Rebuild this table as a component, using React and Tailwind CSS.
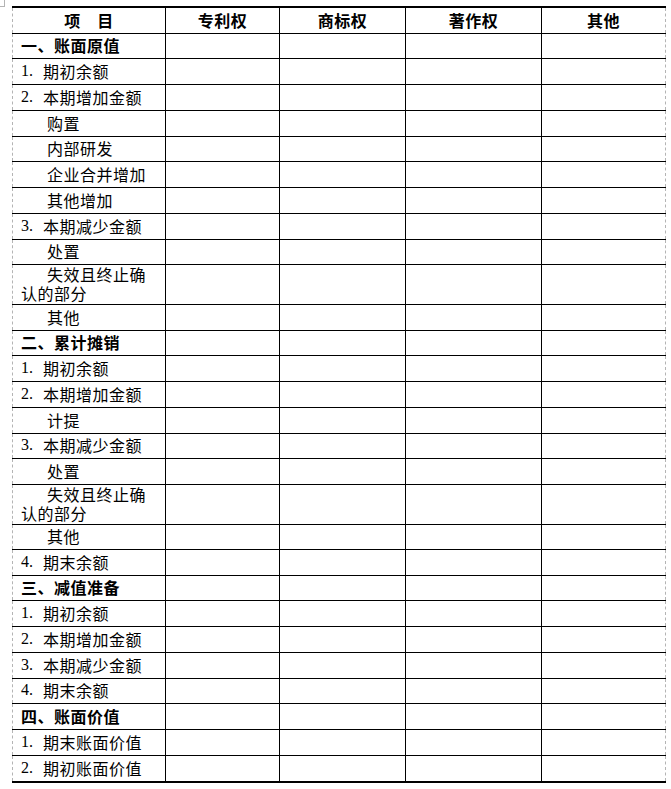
import React from "react";

const cols = ["w-[154px]", "w-[114px]", "w-[126px]", "w-[136px]", "w-[124px]"];

const rows = [
  { text: "一、账面原值", bold: true, h: "h-[25px]" },
  { num: "1.", text: "期初余额", h: "h-[26px]" },
  { num: "2.", text: "本期增加金额", h: "h-[26px]" },
  { text: "购置", indent: true, h: "h-[26px]" },
  { text: "内部研发", indent: true, h: "h-[25px]" },
  { text: "企业合并增加", indent: true, h: "h-[26px]" },
  { text: "其他增加", indent: true, h: "h-[26px]" },
  { num: "3.", text: "本期减少金额", h: "h-[26px]" },
  { text: "处置", indent: true, h: "h-[25px]" },
  { text: "失效且终止确", more: "认的部分", indent: true, h: "h-[40px]" },
  { text: "其他", indent: true, h: "h-[26px]" },
  { text: "二、累计摊销", bold: true, h: "h-[25px]" },
  { num: "1.", text: "期初余额", h: "h-[26px]" },
  { num: "2.", text: "本期增加金额", h: "h-[26px]" },
  { text: "计提", indent: true, h: "h-[26px]" },
  { num: "3.", text: "本期减少金额", h: "h-[25px]" },
  { text: "处置", indent: true, h: "h-[26px]" },
  { text: "失效且终止确", more: "认的部分", indent: true, h: "h-[40px]" },
  { text: "其他", indent: true, h: "h-[25px]" },
  { num: "4.", text: "期末余额", h: "h-[26px]" },
  { text: "三、减值准备", bold: true, h: "h-[25px]" },
  { num: "1.", text: "期初余额", h: "h-[26px]" },
  { num: "2.", text: "本期增加金额", h: "h-[26px]" },
  { num: "3.", text: "本期减少金额", h: "h-[26px]" },
  { num: "4.", text: "期末余额", h: "h-[25px]" },
  { text: "四、账面价值", bold: true, h: "h-[26px]" },
  { num: "1.", text: "期末账面价值", h: "h-[26px]" },
  { num: "2.", text: "期初账面价值", h: "h-[27px]", last: true },
];

// first column: dashed grey guide on the left, solid black rule on the right
const firstCol = `${cols[0]} border-l border-r border-l-[#b4b4b4] border-r-black [border-left-style:dashed] [border-right-style:solid]`;
const lastCol = `${cols[4]} border-r border-r-[#b4b4b4] [border-right-style:dashed]`;

function EmptyCells() {
  return (
    <>
      <div className={`${cols[1]} border-r border-black`} />
      <div className={`${cols[2]} border-r border-black`} />
      <div className={`${cols[3]} border-r border-black`} />
      <div className={lastCol} />
    </>
  );
}

function ItemCell({ row }) {
  if (row.more) {
    return (
      <div className={`${firstCol} pl-[8px] pb-[2px] flex flex-col justify-center text-[16px] leading-[19px] tracking-[0.5px]`}>
        <span className="pl-[26px]">{row.text}</span>
        <span>{row.more}</span>
      </div>
    );
  }
  return (
    <div className={`${firstCol} pl-[8px] pb-[2px] flex items-center text-[16px] leading-[20px] tracking-[0.5px] ${row.bold ? "font-bold" : ""}`}>
      {row.num && (
        <span className="inline-block w-[22px] tracking-normal font-['Liberation_Serif',serif]">{row.num}</span>
      )}
      <span className={row.indent ? "pl-[26px]" : ""}>{row.text}</span>
    </div>
  );
}

export default function App() {
  return (
    <div className="bg-white min-h-[789px] w-[671px] text-black font-['Noto_Sans_CJK_SC','Noto_Sans',sans-serif]">
      <div className="flex items-start">
        <div className="w-[5px] h-[7px] border-r border-b border-[#b4b4b4]" />
        <div className="ml-[7px] mt-[6px] w-[654px]">
          <div className="flex h-[28px] border-t-2 border-b border-black font-bold text-[16px] leading-[20px] tracking-[0.5px]">
            <div className={`${firstCol} pb-[2px] flex items-center justify-center`}>项　目</div>
            <div className={`${cols[1]} pb-[2px] border-r border-black flex items-center justify-center`}>专利权</div>
            <div className={`${cols[2]} pb-[2px] border-r border-black flex items-center justify-center`}>商标权</div>
            <div className={`${cols[3]} pb-[2px] border-r border-black flex items-center justify-center`}>著作权</div>
            <div className={`${lastCol} pb-[2px] flex items-center justify-center`}>其他</div>
          </div>
          {rows.map((row, i) => (
            <div
              key={i}
              className={`flex ${row.h} border-black ${row.last ? "border-b-2" : "border-b"}`}
            >
              <ItemCell row={row} />
              <EmptyCells />
            </div>
          ))}
        </div>
      </div>
    </div>
  );
}
